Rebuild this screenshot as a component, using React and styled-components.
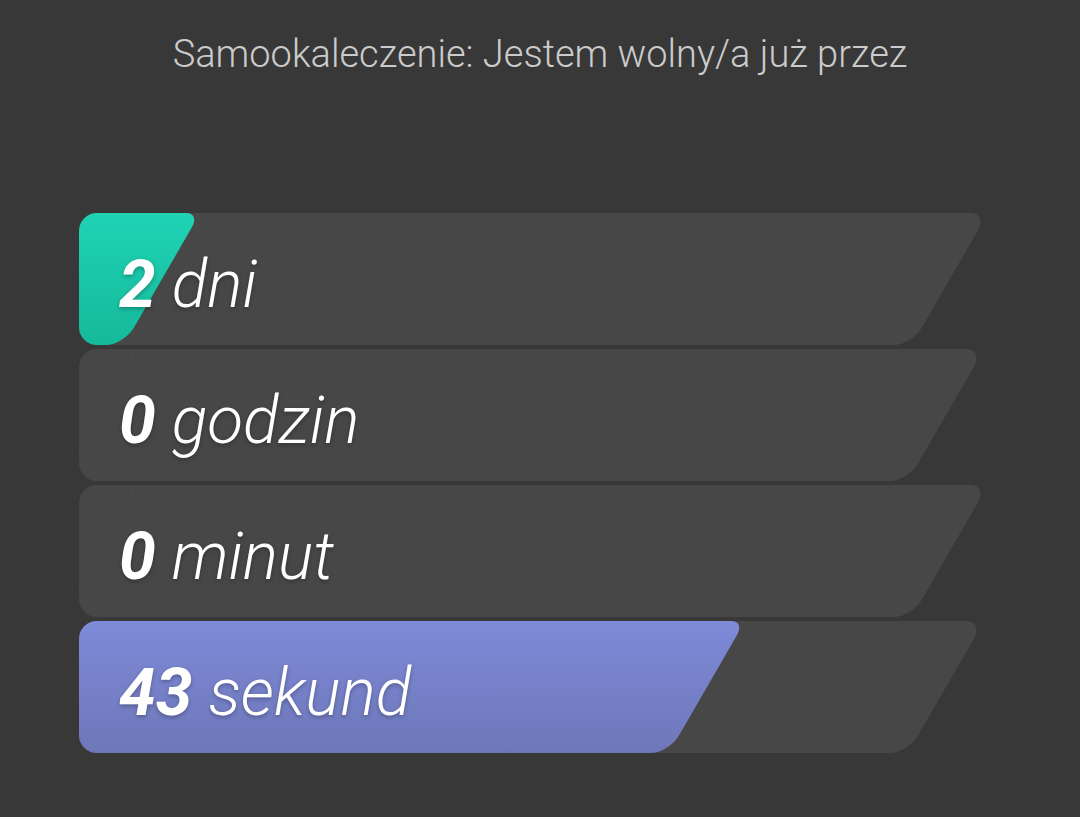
import React from "react";
import styled, { createGlobalStyle } from "styled-components";

const GlobalStyle = createGlobalStyle`
  html, body {
    margin: 0;
    padding: 0;
    background: #383838;
  }
  body {
    min-height: 100vh;
    font-family: Roboto, "Noto Sans", "Liberation Sans", sans-serif;
  }
`;

const Page = styled.main`
  display: flex;
  flex-direction: column;
  padding: 32px 0 40px;
`;

const Title = styled.h1`
  margin: 0;
  text-align: center;
  font-family: Roboto, "Liberation Sans", sans-serif;
  font-weight: 300;
  font-size: 38px;
  line-height: 44px;
  color: #cbcbcb;
`;

const Counters = styled.section`
  display: flex;
  flex-direction: column;
  gap: 4px;
  margin: 137px 0 0 79px;
  width: 921px;
`;

const Row = styled.div`
  display: grid;
  height: 132px;
  overflow: hidden;
  border-radius: 18px 0 0 18px;
`;

/* slanted track; the left part runs past the row and is clipped */
const Track = styled.div`
  grid-area: 1 / 1;
  display: flex;
  margin-left: -60px;
  margin-right: ${(p) => p.$reach}px;
  transform: skewX(-30deg);
  border-radius: 18px;
  background: #474747;
  overflow: hidden;
`;

const tones = {
  teal: "linear-gradient(180deg, #1fd3b4 0%, #15b99b 100%)",
  amber: "linear-gradient(180deg, #f2b34a 0%, #d9962e 100%)",
  rose: "linear-gradient(180deg, #ec6f7e 0%, #d45566 100%)",
  indigo: "linear-gradient(180deg, #7f8ad9 0%, #6d77b8 100%)",
};

const Fill = styled.div`
  flex-shrink: 0;
  height: 100%;
  border-radius: 14px 14px 18px 18px;
  background: ${(p) => (p.$empty ? "transparent" : tones[p.$tone])};
  box-shadow: ${(p) =>
    p.$empty ? "inset -1px 0 0 rgba(255, 255, 255, 0.045)" : "none"};
`;

const Label = styled.div`
  grid-area: 1 / 1;
  position: relative;
  display: flex;
  align-items: center;
  padding: 10px 0 0 40px;
  font-family: Roboto, "Liberation Sans", sans-serif;
  font-size: 66px;
  font-style: italic;
  color: #ffffff;
  text-shadow: 0 2px 4px rgba(0, 0, 0, 0.28);
  white-space: pre;
`;

const Amount = styled.span`
  font-weight: 700;
`;

const Unit = styled.span`
  font-weight: 300;
`;

const counters = [
  { value: 2, unit: "dni", max: 28, tone: "teal", reach: 50 },
  { value: 0, unit: "godzin", max: 24, tone: "amber", reach: 54 },
  { value: 0, unit: "minut", max: 60, tone: "rose", reach: 50 },
  { value: 43, unit: "sekund", max: 60, tone: "indigo", reach: 54 },
];

const BASE = 82;

export default function App() {
  return (
    <>
      <GlobalStyle />
      <Page>
        <Title>Samookaleczenie: Jestem wolny/a już przez</Title>
        <Counters>
          {counters.map((c) => {
            const share = Math.min(c.value / c.max, 1);
            return (
              <Row key={c.unit}>
                <Track $reach={c.reach}>
                  <Fill
                    $tone={c.tone}
                    $empty={c.value === 0}
                    style={{ width: `calc(${BASE}px + (100% - ${BASE}px) * ${share})` }}
                  />
                </Track>
                <Label>
                  <Amount>{c.value}</Amount>
                  <Unit> {c.unit}</Unit>
                </Label>
              </Row>
            );
          })}
        </Counters>
      </Page>
    </>
  );
}
